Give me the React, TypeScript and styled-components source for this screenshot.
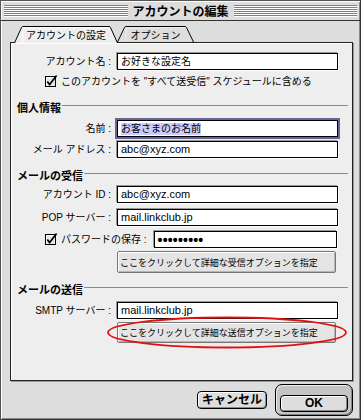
import React from 'react';
import styled, { createGlobalStyle } from 'styled-components';

const GlobalStyle = createGlobalStyle`
  html, body {
    margin: 0;
    padding: 0;
    background: #dddddd;
  }
  body {
    font-family: "Noto Sans CJK JP", "Liberation Sans", sans-serif;
    color: #000;
  }
  * {
    box-sizing: border-box;
  }
`

const Window = styled.div`
  width: 361px;
  height: 420px;
  display: flex;
  flex-direction: column;
  background: #dddddd;
  border: 1px solid #555;
  border-right-color: #333;
  border-bottom-color: #333;
  box-shadow: inset 1px 1px 0 #fff, inset -1px -1px 0 #888;
`

const TitleBar = styled.div`
  flex: none;
  height: 20px;
  display: flex;
  align-items: center;
  gap: 5px;
  padding: 0 3px;
  border-bottom: 1px solid #333;
`

const Stripes = styled.div`
  flex: 1;
  height: 12px;
  background: repeating-linear-gradient(to bottom, #808080 0 1px, #ffffff 1px 2px);
`

const Title = styled.span`
  font-size: 12px;
  font-weight: bold;
  line-height: 1;
  white-space: nowrap;
`

const Body = styled.div`
  flex: 1;
  display: flex;
  flex-direction: column;
  padding: 5px 7px 0 9px;
`

const TabRow = styled.div`
  height: 16px;
  display: flex;
  align-items: flex-start;
  padding-left: 4px;
  position: relative;
  z-index: 2;
`

const TabBox = styled.div<{ $w: number; $active?: boolean }>`
  position: relative;
  width: ${p => p.$w}px;
  height: ${p => (p.$active ? 17 : 16)}px;
  margin-left: ${p => (p.$active ? 0 : -1)}px;
  display: flex;
  align-items: center;
  justify-content: center;
  font-size: 10px;
  line-height: 1;
  padding-top: 1px;

  svg {
    position: absolute;
    left: 0;
    top: 0;
  }
  span {
    position: relative;
  }
`

const Panel = styled.div`
  flex: none;
  height: 339px;
  position: relative;
  display: flex;
  flex-direction: column;
  background: #eeeeee;
  border: 1px solid #222;
  box-shadow: 1px 1px 0 #999, inset 1px 1px 0 #fff;
`

const Row = styled.div<{ $mt: number }>`
  display: grid;
  grid-template-columns: 100px 221px;
  column-gap: 6px;
  align-items: center;
  margin-top: ${p => p.$mt}px;
`

const Label = styled.span`
  text-align: right;
  font-family: "Liberation Sans", "Noto Sans CJK JP", sans-serif;
  font-size: 10px;
  line-height: 1;
  white-space: nowrap;
`

const Field = styled.div<{ $latin?: boolean; $focused?: boolean; $w?: number }>`
  height: 17px;
  width: ${p => (p.$w ? `${p.$w}px` : 'auto')};
  display: flex;
  align-items: center;
  padding-left: 3px;
  background: #fff;
  border: 1px solid #000;
  box-shadow: ${p => (p.$focused ? '0 0 0 2px #65659a' : '-1px -1px 0 #999, 1px 1px 0 #fff')};
  font-family: "Liberation Sans", "Noto Sans CJK JP", sans-serif;
  font-size: ${p => (p.$latin ? 11 : 10)}px;
  line-height: 1;
  white-space: nowrap;
`

const Selected = styled.span`
  background: #ccccff;
  padding: 1px 0;
`

const Dots = styled.span`
  font-size: 14px;
  font-weight: bold;
  letter-spacing: 0.2px;
`

const CheckRow = styled.div<{ $mt: number }>`
  display: flex;
  align-items: center;
  gap: 3px;
  padding-left: 34px;
  margin-top: ${p => p.$mt}px;
  font-family: "Liberation Sans", "Noto Sans CJK JP", sans-serif;
  font-size: 10px;
  line-height: 1;
  white-space: nowrap;
`

const CheckText = styled.span`
  margin-right: 4px;
`

const SectionHead = styled.div<{ $mt: number }>`
  display: flex;
  align-items: center;
  gap: 1px;
  height: 14px;
  padding: 0 4px 0 6px;
  margin-top: ${p => p.$mt}px;
  font-size: 11px;
  font-weight: bold;
  line-height: 1;

  &::after {
    content: '';
    flex: 1;
    height: 1px;
    margin-bottom: 3px;
    background: #8a8a8a;
  }
`

const ButtonRow = styled.div<{ $mt: number }>`
  position: relative;
  width: 219px;
  margin-left: 106px;
  margin-top: ${p => p.$mt}px;
`

const OptionButton = styled.button<{ $h: number }>`
  display: flex;
  align-items: center;
  width: 100%;
  height: ${p => p.$h}px;
  padding: 0 0 0 2px;
  border: 1px solid #777;
  border-radius: 2px;
  background: #e4e4e4;
  box-shadow: inset 1px 1px 0 #fff, inset -1px -1px 0 #b5b5b5;
  font-family: "Noto Sans CJK JP", sans-serif;
  font-size: 9px;
  line-height: 1;
  color: #000;
  white-space: nowrap;
`

const Ellipse = styled.svg`
  position: absolute;
  left: -11px;
  top: -6px;
  pointer-events: none;
`

const Footer = styled.div`
  flex: 1;
  display: flex;
  justify-content: flex-end;
  align-items: center;
  gap: 8px;
`

const PushButton = styled.button<{ $w: number; $h: number }>`
  width: ${p => p.$w}px;
  height: ${p => p.$h}px;
  padding: 0;
  border: 1px solid #000;
  border-radius: 4px;
  background: #dddddd;
  box-shadow: inset 1px 1px 0 #fff, inset -1px -1px 0 #888;
  font-family: "Liberation Sans", "Noto Sans CJK JP", sans-serif;
  font-size: 12px;
  font-weight: bold;
  line-height: 1;
  color: #000;
`

const DefaultRing = styled.div`
  padding: 3px 4px;
  border: 1px solid #000;
  border-radius: 7px;
  background: #c4c4c4;
  box-shadow: inset 1px 1px 0 #eee, inset -1px -1px 0 #888;
`

function Tab({ label, width, active }: { label: string; width: number; active?: boolean }) {
  const h = active ? 17 : 16
  const w = width
  const d = `M0.5,${h} L7.5,1.5 Q8,0.5 9,0.5 L${w - 9},0.5 Q${w - 8},0.5 ${w - 7.5},1.5 L${w - 0.5},${h}`
  return (
    <TabBox $w={w} $active={active}>
      <svg width={w} height={h} viewBox={`0 0 ${w} ${h}`}>
        <path d={d} fill={active ? '#eeeeee' : '#dddddd'} stroke="#000" />
        <path d={`M8.6,${h} L9.2,2 L${w - 9},1.5`} fill="none" stroke={active ? '#fff' : '#f0f0f0'} />
      </svg>
      <span>{label}</span>
    </TabBox>
  )
}

function CheckBox() {
  return (
    <svg width="13" height="13" viewBox="0 0 13 13">
      <rect x="0.5" y="1.5" width="10" height="10" fill="#e6e6e6" stroke="#000" />
      <path d="M1.5,10.5 V2.5 H9.5" fill="none" stroke="#fff" />
      <path d="M2.3,6.6 L4.6,9.6 L11.6,0.6" fill="none" stroke="#000" strokeWidth="1.7" />
    </svg>
  )
}

function App() {
  return (
    <Window>
      <GlobalStyle />
      <TitleBar>
        <Stripes />
        <Title>アカウントの編集</Title>
        <Stripes />
      </TitleBar>
      <Body>
        <TabRow>
          <Tab label="アカウントの設定" width={104} active />
          <Tab label="オプション" width={77} />
        </TabRow>
        <Panel>
          <Row $mt={10}>
            <Label>アカウント名 :</Label>
            <Field>お好きな設定名</Field>
          </Row>
          <CheckRow $mt={5}>
            <CheckBox />
            <span>このアカウントを "すべて送受信" スケジュールに含める</span>
          </CheckRow>

          <SectionHead $mt={12}>個人情報</SectionHead>
          <Row $mt={6}>
            <Label>名前 :</Label>
            <Field $focused><Selected>お客さまのお名前</Selected></Field>
          </Row>
          <Row $mt={4}>
            <Label>メール アドレス :</Label>
            <Field $latin>abc@xyz.com</Field>
          </Row>

          <SectionHead $mt={10}>メールの受信</SectionHead>
          <Row $mt={4}>
            <Label>アカウント ID :</Label>
            <Field $latin>abc@xyz.com</Field>
          </Row>
          <Row $mt={6}>
            <Label>POP サーバー :</Label>
            <Field $latin>mail.linkclub.jp</Field>
          </Row>
          <CheckRow $mt={5}>
            <CheckBox />
            <CheckText>パスワードの保存 :</CheckText>
            <Field $w={183}><Dots>•••••••••</Dots></Field>
          </CheckRow>
          <ButtonRow $mt={3}>
            <OptionButton $h={22}>ここをクリックして詳細な受信オプションを指定</OptionButton>
          </ButtonRow>

          <SectionHead $mt={9}>メールの送信</SectionHead>
          <Row $mt={6}>
            <Label>SMTP サーバー :</Label>
            <Field $latin>mail.linkclub.jp</Field>
          </Row>
          <ButtonRow $mt={3}>
            <OptionButton $h={21}>ここをクリックして詳細な送信オプションを指定</OptionButton>
            <Ellipse width="242" height="33" viewBox="0 0 242 33">
              <ellipse cx="121" cy="16.5" rx="119" ry="15" fill="none" stroke="#e41010" strokeWidth="1.8" />
            </Ellipse>
          </ButtonRow>
        </Panel>
        <Footer>
          <PushButton $w={70} $h={18}>キャンセル</PushButton>
          <DefaultRing>
            <PushButton $w={68} $h={17}>OK</PushButton>
          </DefaultRing>
        </Footer>
      </Body>
    </Window>
  )
}

export default App
